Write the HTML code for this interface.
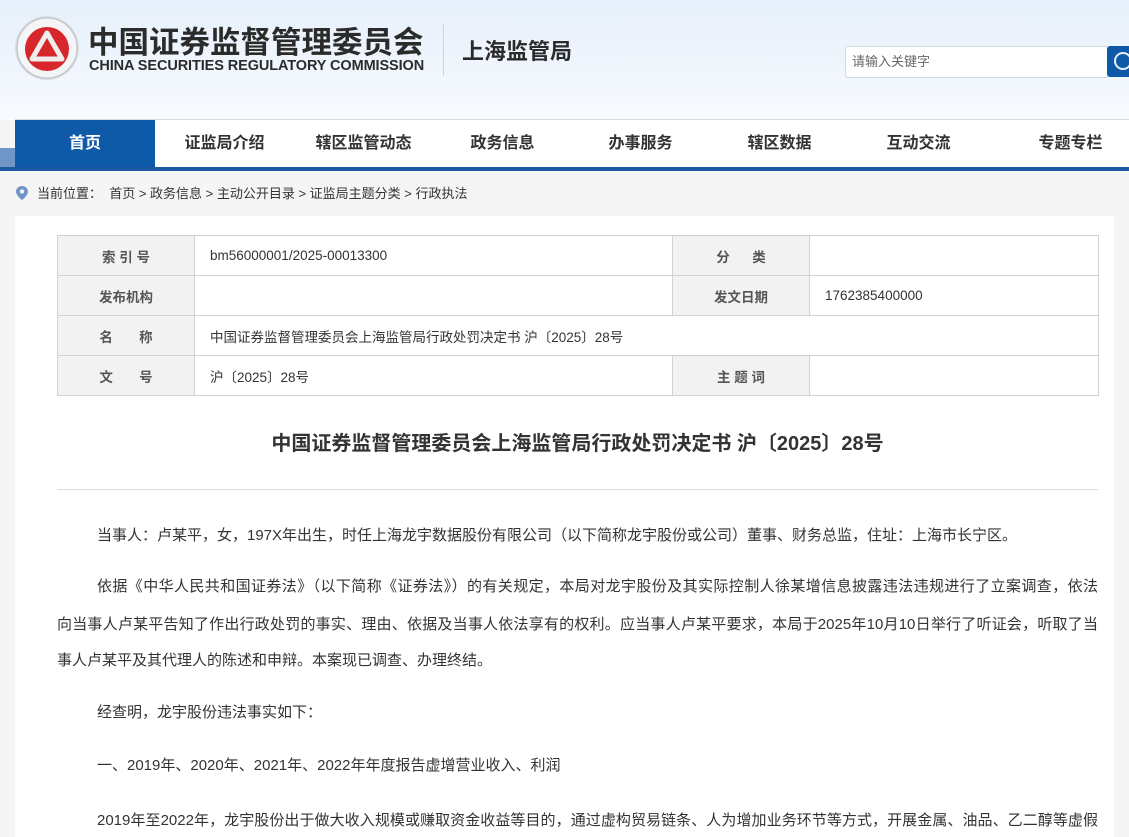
<!DOCTYPE html>
<html><head><meta charset="utf-8"><style>
*{margin:0;padding:0;box-sizing:border-box}
html,body{width:1129px;height:837px;overflow:hidden}
body{background:#f5f5f5;font-family:"Liberation Sans","Noto Sans CJK SC",sans-serif;color:#333;position:relative}
.hdr{position:absolute;left:0;top:0;width:1129px;height:120px;background:linear-gradient(#e6effa,#f8fbff)}
.abs{position:absolute;white-space:nowrap}
.nav{position:absolute;left:15px;top:119px;width:1114px;height:48px;background:#fff;border-top:1px solid #dcdcdc}
.nav div{position:absolute;top:0;height:48px;line-height:48px;font-size:16px;font-weight:bold;color:#333;text-align:center;width:139px}
.bar{position:absolute;left:0;top:167px;width:1129px;height:4px;background:#1b5aa1}
.panel{position:absolute;left:15px;top:216px;width:1099px;height:621px;background:#fff}
table{position:absolute;left:57px;top:235px;border-collapse:collapse;font-size:13.5px}
td{border:1px solid #cfd3d8;height:40px;padding:0 15px}
td.h{background:#f2f2f2;font-weight:bold;text-align:center;color:#555;width:137px;padding:0}
.ln{position:absolute;left:57px;width:1041px;font-size:15px;line-height:20px;height:20px;white-space:nowrap;color:#333}
.j{text-align:justify;text-align-last:justify;white-space:normal;overflow:hidden}
</style></head><body>
<div class="hdr"></div>
<svg class="abs" style="left:14px;top:15px" width="66" height="66" viewBox="0 0 66 66">
<circle cx="33" cy="33" r="32" fill="#d9dde2"/><circle cx="33" cy="33" r="30" fill="#f4f5f7" stroke="#b9bec5"/>
<circle cx="33" cy="34" r="22" fill="#d7262c"/>
<path d="M33 18 L48 44 H18 Z" fill="none" stroke="#eee" stroke-width="5" stroke-linejoin="round"/>
<path d="M33 28 L41 41 H25 Z" fill="#d7262c"/>
</svg>
<div class="abs" style="left:88px;top:27px;font-size:30.5px;line-height:32px;font-weight:bold;color:#2b2b2b">中国证券监督管理委员会</div>
<div class="abs" style="left:89px;top:58px;font-size:14.5px;line-height:16px;font-weight:bold;color:#2b2b2b;letter-spacing:-0.1px">CHINA SECURITIES REGULATORY COMMISSION</div>
<div class="abs" style="left:443px;top:24px;width:1px;height:52px;background:#cfd5dc"></div>
<div class="abs" style="left:462px;top:38px;font-size:22px;line-height:28px;font-weight:bold;color:#2b2b2b">上海监管局</div>
<div class="abs" style="left:845px;top:46px;width:264px;height:32px;background:#fff;border:1px solid #d4d8dd;border-radius:3px;font-size:13px;color:#666;line-height:30px;padding-left:6px">请输入关键字</div>
<div class="abs" style="left:1107px;top:46px;width:30px;height:31px;background:#0f5aa8;border-radius:3px"><div style="position:absolute;left:7px;top:6px;width:18px;height:18px;border:2px solid #e8eef6;border-radius:50%"></div></div>
<div class="abs" style="left:0;top:148px;width:15px;height:19px;background:#6f96c6"></div>
<div class="nav">
<div style="left:0;width:140px;background:#0f5aa8;color:#fff">首页</div>
<div style="left:140px">证监局介绍</div>
<div style="left:279px">辖区监管动态</div>
<div style="left:418px">政务信息</div>
<div style="left:556px">办事服务</div>
<div style="left:695px">辖区数据</div>
<div style="left:834px">互动交流</div>
<div style="left:986px">专题专栏</div>
</div>
<div class="bar"></div>
<svg class="abs" style="left:16px;top:186px" width="12" height="14" viewBox="0 0 12 14"><path d="M6 0C2.7 0 0 2.5 0 5.6 0 9.5 6 14 6 14s6-4.5 6-8.4C12 2.5 9.3 0 6 0z" fill="#6f96c6"/><circle cx="6" cy="5.5" r="2.2" fill="#f5f5f5"/></svg>
<div class="abs" style="left:37px;top:186px;font-size:13px;line-height:16px;color:#333">当前位置： &nbsp;首页 &gt; 政务信息 &gt; 主动公开目录 &gt; 证监局主题分类 &gt; 行政执法</div>
<div class="panel"></div>
<table>
<tr><td class="h">索 引 号</td><td style="width:478px">bm56000001/2025-00013300</td><td class="h">分&nbsp;&nbsp;&nbsp;&nbsp;&nbsp;&nbsp;类</td><td style="width:289px"></td></tr>
<tr><td class="h">发布机构</td><td></td><td class="h">发文日期</td><td>1762385400000</td></tr>
<tr><td class="h">名&nbsp;&nbsp;&nbsp;&nbsp;&nbsp;&nbsp;&nbsp;称</td><td colspan="3">中国证券监督管理委员会上海监管局行政处罚决定书 沪〔2025〕28号</td></tr>
<tr><td class="h">文&nbsp;&nbsp;&nbsp;&nbsp;&nbsp;&nbsp;&nbsp;号</td><td>沪〔2025〕28号</td><td class="h">主 题 词</td><td></td></tr>
</table>
<div class="abs" style="left:57px;width:1041px;top:431px;text-align:center;font-size:20px;font-weight:bold;color:#333;line-height:26px">中国证券监督管理委员会上海监管局行政处罚决定书 沪〔2025〕28号</div>
<div class="abs" style="left:57px;top:489px;width:1041px;height:1px;background:#ddd"></div>
<div class="ln" style="top:526px;padding-left:40px">当事人：卢某平，女，197X年出生，时任上海龙宇数据股份有限公司（以下简称龙宇股份或公司）董事、财务总监，住址：上海市长宁区。</div>
<div class="ln j" style="top:577px;padding-left:40px">依据《中华人民共和国证券法》（以下简称《证券法》）的有关规定，本局对龙宇股份及其实际控制人徐某增信息披露违法违规进行了立案调查，依法</div>
<div class="ln j" style="top:615px">向当事人卢某平告知了作出行政处罚的事实、理由、依据及当事人依法享有的权利。应当事人卢某平要求，本局于2025年10月10日举行了听证会，听取了当</div>
<div class="ln" style="top:651px">事人卢某平及其代理人的陈述和申辩。本案现已调查、办理终结。</div>
<div class="ln" style="top:703px;padding-left:40px">经查明，龙宇股份违法事实如下：</div>
<div class="ln" style="top:756px;padding-left:40px">一、2019年、2020年、2021年、2022年年度报告虚增营业收入、利润</div>
<div class="ln j" style="top:811px;padding-left:40px">2019年至2022年，龙宇股份出于做大收入规模或赚取资金收益等目的，通过虚构贸易链条、人为增加业务环节等方式，开展金属、油品、乙二醇等虚假</div>
</body></html>
